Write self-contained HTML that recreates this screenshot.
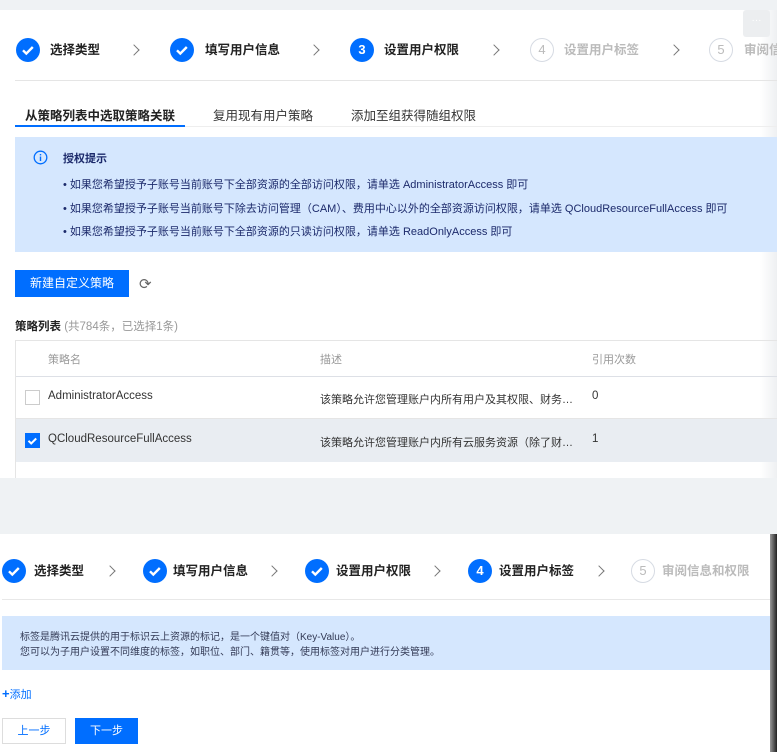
<!DOCTYPE html>
<html><head><meta charset="utf-8"><style>
*{margin:0;padding:0;box-sizing:border-box}
html,body{width:777px;height:752px;overflow:hidden}
body{background:#eff2f4;font-family:"Liberation Sans","Noto Sans CJK SC",sans-serif;position:relative;color:#222}
.a{position:absolute;white-space:nowrap}
.panel{position:absolute;background:#fff}
.c{position:absolute;width:24px;height:24px;border-radius:50%;background:#006eff;color:#fff;font-size:13px;font-weight:bold;text-align:center;line-height:24px}
.c.g{background:#fff;border:1.5px solid #d6dbe3;color:#bbb;line-height:21px;font-weight:normal}
.st{position:absolute;font-size:12.5px;font-weight:bold;color:#222;line-height:16px;white-space:nowrap}
.st.g{color:#bbb}
.ch{position:absolute;width:8px;height:8px;border-top:1.5px solid #777;border-right:1.5px solid #777;transform:rotate(45deg)}
.t{font-size:11px;color:#1c2a6b}
</style></head><body>
<div class="panel" style="left:0;top:10px;width:777px;height:468px;background:linear-gradient(to right,#fff 760px,#eef0f2 777px)"></div>

<svg width="0" height="0" style="position:absolute"><defs><symbol id="ck" viewBox="0 0 24 24"><path d="M7 12.3l3.3 3.3 6.5-6.6" fill="none" stroke="#fff" stroke-width="2.4"/></symbol></defs></svg>

<div class="c" style="left:16px;top:38px"><svg width="24" height="24"><use href="#ck"/></svg></div>
<div class="st" style="left:50px;top:42px">选择类型</div>
<div class="ch" style="left:130px;top:46px"></div>
<div class="c" style="left:170px;top:38px"><svg width="24" height="24"><use href="#ck"/></svg></div>
<div class="st" style="left:205px;top:42px">填写用户信息</div>
<div class="ch" style="left:310px;top:46px"></div>
<div class="c" style="left:350px;top:38px">3</div>
<div class="st" style="left:384px;top:42px">设置用户权限</div>
<div class="ch" style="left:490px;top:46px"></div>
<div class="c g" style="left:530px;top:38px">4</div>
<div class="st g" style="left:564px;top:42px">设置用户标签</div>
<div class="ch" style="left:670px;top:46px"></div>
<div class="c g" style="left:709px;top:38px">5</div>
<div class="st g" style="left:744px;top:42px;width:33px;overflow:hidden">审阅信息和权限</div>
<div class="a" style="left:743px;top:10px;width:27px;height:27px;background:#eceef0;border-radius:3px;color:#fff;font-size:10px;text-align:center;line-height:22px">···</div>
<div class="a" style="left:15px;top:80px;width:762px;height:1px;background:#e5e5e5"></div>

<div class="a" style="left:25px;top:105px;font-size:12.5px;font-weight:bold">从策略列表中选取策略关联</div>
<div class="a" style="left:213px;top:105px;font-size:12.5px;color:#333">复用现有用户策略</div>
<div class="a" style="left:351px;top:105px;font-size:12.5px;color:#333">添加至组获得随组权限</div>
<div class="a" style="left:15px;top:126px;width:762px;height:1px;background:#eee"></div>
<div class="a" style="left:15px;top:125px;width:170px;height:2px;background:#006eff"></div>

<div class="a" style="left:15px;top:137px;width:762px;height:115px;background:#d5e7fe"></div>
<svg class="a" style="left:33px;top:150px" width="15" height="15"><circle cx="7.5" cy="7.5" r="6.3" fill="none" stroke="#006eff" stroke-width="1.3"/><rect x="6.8" y="6.5" width="1.4" height="4.5" fill="#006eff"/><rect x="6.8" y="4" width="1.4" height="1.4" fill="#006eff"/></svg>
<div class="a t" style="left:63px;top:150px;font-weight:bold">授权提示</div>
<div class="a t" style="left:63px;top:176px">• 如果您希望授予子账号当前账号下全部资源的全部访问权限，请单选 AdministratorAccess 即可</div>
<div class="a t" style="left:63px;top:200px">• 如果您希望授予子账号当前账号下除去访问管理（CAM）、费用中心以外的全部资源访问权限，请单选 QCloudResourceFullAccess 即可</div>
<div class="a t" style="left:63px;top:223px">• 如果您希望授予子账号当前账号下全部资源的只读访问权限，请单选 ReadOnlyAccess 即可</div>

<div class="a" style="left:15px;top:270px;width:114px;height:27px;background:#006eff;color:#fff;font-size:12px;text-align:center;line-height:27px">新建自定义策略</div>
<div class="a" style="left:139px;top:275px;font-size:15px;color:#666">⟳</div>
<div class="a" style="left:15px;top:318px;font-size:11.5px;font-weight:bold">策略列表 <span style="font-weight:normal;color:#999">(共784条，已选择1条)</span></div>

<div class="a" style="left:15px;top:340px;width:762px;height:138px;border-left:1px solid #e5e5e5;border-top:1px solid #e5e5e5"></div>
<div class="a" style="left:16px;top:376px;width:761px;height:1px;background:#dde0e6"></div>
<div class="a" style="left:48px;top:351px;font-size:11px;color:#999">策略名</div>
<div class="a" style="left:320px;top:351px;font-size:11px;color:#999">描述</div>
<div class="a" style="left:592px;top:351px;font-size:11px;color:#999">引用次数</div>
<div class="a" style="left:16px;top:418px;width:761px;height:1px;background:#e5e5e5"></div>
<div class="a" style="left:25px;top:390px;width:15px;height:15px;border:1px solid #ccc;background:#fff"></div>
<div class="a" style="left:48px;top:390px;font-size:11.5px;color:#333">AdministratorAccess</div>
<div class="a" style="left:320px;top:391px;font-size:11px;color:#333">该策略允许您管理账户内所有用户及其权限、财务…</div>
<div class="a" style="left:592px;top:390px;font-size:11.5px;color:#333">0</div>
<div class="a" style="left:16px;top:419px;width:761px;height:43px;background:#e9edf2"></div>
<div class="a" style="left:25px;top:433px;width:15px;height:15px;background:#006eff"><svg width="15" height="15"><path d="M3.5 7.8l2.7 2.7 5-5" fill="none" stroke="#fff" stroke-width="2"/></svg></div>
<div class="a" style="left:48px;top:433px;font-size:11.5px;color:#333">QCloudResourceFullAccess</div>
<div class="a" style="left:320px;top:434px;font-size:11px;color:#333">该策略允许您管理账户内所有云服务资源（除了财…</div>
<div class="a" style="left:592px;top:433px;font-size:11.5px;color:#333">1</div>

<div class="panel" style="left:0;top:534px;width:777px;height:218px"></div>
<div class="a" style="left:770px;top:534px;width:7px;height:218px;background:linear-gradient(to right,#999,#222)"></div>
<div class="c" style="left:2px;top:559px"><svg width="24" height="24"><use href="#ck"/></svg></div>
<div class="st" style="left:34px;top:563px">选择类型</div>
<div class="ch" style="left:106px;top:567px"></div>
<div class="c" style="left:143px;top:559px"><svg width="24" height="24"><use href="#ck"/></svg></div>
<div class="st" style="left:173px;top:563px">填写用户信息</div>
<div class="ch" style="left:268px;top:567px"></div>
<div class="c" style="left:305px;top:559px"><svg width="24" height="24"><use href="#ck"/></svg></div>
<div class="st" style="left:336px;top:563px">设置用户权限</div>
<div class="ch" style="left:431px;top:567px"></div>
<div class="c" style="left:468px;top:559px">4</div>
<div class="st" style="left:499px;top:563px">设置用户标签</div>
<div class="ch" style="left:595px;top:567px"></div>
<div class="c g" style="left:631px;top:559px">5</div>
<div class="st g" style="left:662px;top:563px">审阅信息和权限</div>
<div class="a" style="left:2px;top:599px;width:768px;height:1px;background:#e8e8e8"></div>

<div class="a" style="left:2px;top:616px;width:768px;height:54px;background:#d5e7fe"></div>
<div class="a" style="left:20px;top:628px;font-size:10px;color:#333a55">标签是腾讯云提供的用于标识云上资源的标记，是一个键值对（Key-Value）。</div>
<div class="a" style="left:20px;top:643px;font-size:10px;color:#333a55">您可以为子用户设置不同维度的标签，如职位、部门、籍贯等，使用标签对用户进行分类管理。</div>
<div class="a" style="left:2px;top:686px;font-size:11px;color:#006eff"><b style="font-size:13px">+</b>添加</div>
<div class="a" style="left:2px;top:718px;width:64px;height:26px;border:1px solid #ddd;background:#fff;color:#006eff;font-size:11px;text-align:center;line-height:24px">上一步</div>
<div class="a" style="left:75px;top:718px;width:63px;height:26px;background:#006eff;color:#fff;font-size:11px;text-align:center;line-height:26px">下一步</div>
</body></html>
